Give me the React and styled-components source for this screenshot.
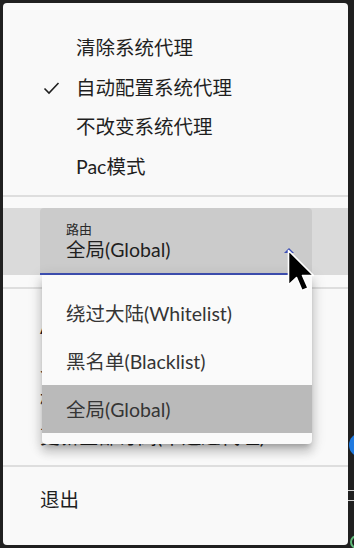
import React from "react";
import styled, { createGlobalStyle } from "styled-components";

const FONT = `Lato, "Noto Sans CJK SC", sans-serif`;

const GlobalStyle = createGlobalStyle`
  html, body { margin: 0; padding: 0; background: #202020; }
  body { font-family: ${FONT}; }
`;

const Screen = styled.div`
  position: relative;
  width: 354px;
  height: 548px;
  box-sizing: border-box;
  padding: 3px 0 3px 3px;
  background: #202020;
  display: flex;
  overflow: hidden;
  font-family: ${FONT};
`;

const Panel = styled.div`
  width: 345px;
  background: #f9f9f9;
  border-radius: 4px;
  display: flex;
  flex-direction: column;
`;

const SideStrip = styled.div`
  position: relative;
  flex: 1;
`;

const BlueDot = styled.div`
  position: absolute;
  left: 1px;
  top: 430px;
  width: 24px;
  height: 24px;
  border-radius: 50%;
  background: #1f7ae0;
`;

const StripLine = styled.div`
  position: absolute;
  left: 0;
  right: 0;
  top: ${(p) => p.$top}px;
  height: 1px;
  background: #cfcfcf;
`;

const GreenRing = styled.div`
  position: absolute;
  left: 2px;
  top: 532px;
  width: 10px;
  height: 10px;
  border-radius: 50%;
  border: 2px solid #5fb878;
`;

const TopList = styled.div`
  padding-top: 24.5px;
  display: flex;
  flex-direction: column;
`;

const MenuItem = styled.div`
  box-sizing: border-box;
  height: 39.5px;
  display: flex;
  align-items: center;
  padding: 2px 0 0 ${(p) => p.$indent}px;
  font-size: 19.5px;
  line-height: 24px;
  color: #1f1f1f;
  white-space: nowrap;
`;

const CheckSlot = styled.span`
  width: 33px;
  display: flex;
  align-items: center;
`;

const Divider = styled.div`
  height: 2px;
  background: #dedede;
  margin-top: ${(p) => p.$mt}px;
`;

const Band = styled.div`
  margin-top: 11px;
  height: 67px;
  background: #dadada;
  padding-left: 37px;
  position: relative;
  z-index: 2;
`;

const SelectBox = styled.div`
  position: relative;
  width: 272px;
  height: 67px;
  box-sizing: border-box;
  background: #cbcbcb;
  border-radius: 4px 4px 0 0;
  border-bottom: 2px solid #3f51b5;
  padding: 13px 0 0 26px;
  display: flex;
  flex-direction: column;
`;

const SelectLabel = styled.div`
  font-size: 13px;
  line-height: 16px;
  color: #2a2a2a;
`;

const SelectValue = styled.div`
  margin-top: 1px;
  font-size: 19.5px;
  line-height: 24px;
  color: #1f1f1f;
`;

const Caret = styled.svg`
  position: absolute;
  right: 18px;
  top: 40px;
`;

const Popover = styled.div`
  position: absolute;
  top: calc(100% + 2px);
  left: 2px;
  width: 270px;
  box-sizing: border-box;
  padding: 14px 0 11px;
  background: #fafafa;
  border-radius: 0 0 4px 4px;
  box-shadow: 0 5px 5px -3px rgba(0, 0, 0, 0.2),
    0 8px 10px 1px rgba(0, 0, 0, 0.14), 0 3px 14px 2px rgba(0, 0, 0, 0.12);
`;

const PopItem = styled.div`
  box-sizing: border-box;
  height: 48px;
  display: flex;
  align-items: center;
  padding: 2px 0 0 24px;
  font-size: 19.5px;
  line-height: 24px;
  color: #353535;
  background: ${(p) => (p.$active ? "#bababa" : "transparent")};
  white-space: nowrap;
`;

const HiddenList = styled.div`
  margin-top: 19px;
  display: flex;
  flex-direction: column;
`;

const HiddenItem = styled.div`
  box-sizing: border-box;
  height: 36.5px;
  display: flex;
  align-items: center;
  padding: 2px 0 0 37px;
  font-size: 19.5px;
  line-height: 24px;
  color: #1f1f1f;
  white-space: nowrap;
`;

const ExitItem = styled.div`
  box-sizing: border-box;
  margin-top: 11.5px;
  height: 40px;
  display: flex;
  align-items: center;
  padding: 2px 0 0 37px;
  font-size: 19.5px;
  line-height: 24px;
  color: #1f1f1f;
`;

const Cursor = styled.svg`
  position: absolute;
  left: 287px;
  top: 249px;
  z-index: 10;
`;

const Check = () => (
  <svg width="17" height="14" viewBox="0 0 17 14">
    <polyline
      points="1.5,7.5 6,12 15.5,2"
      fill="none"
      stroke="#1f1f1f"
      strokeWidth="1.6"
    />
  </svg>
);

export default function App() {
  return (
    <>
      <GlobalStyle />
      <Screen>
        <Panel>
          <TopList>
            <MenuItem $indent={73}>清除系统代理</MenuItem>
            <MenuItem $indent={40}>
              <CheckSlot>
                <Check />
              </CheckSlot>
              自动配置系统代理
            </MenuItem>
            <MenuItem $indent={73}>不改变系统代理</MenuItem>
            <MenuItem $indent={73}>Pac模式</MenuItem>
          </TopList>
          <Divider $mt={9.5} />
          <Band>
            <SelectBox>
              <SelectLabel>路由</SelectLabel>
              <SelectValue>全局(Global)</SelectValue>
              <Caret width="10" height="5" viewBox="0 0 10 5">
                <polygon points="0,5 5,0 10,5" fill="#3f51b5" />
              </Caret>
              <Popover>
                <PopItem>绕过大陆(Whitelist)</PopItem>
                <PopItem>黑名单(Blacklist)</PopItem>
                <PopItem $active>全局(Global)</PopItem>
              </Popover>
            </SelectBox>
          </Band>
          <Divider $mt={12} />
          <HiddenList>
            <HiddenItem>Auto 启动</HiddenItem>
            <HiddenItem>允许局域网连接</HiddenItem>
            <HiddenItem>检查更新</HiddenItem>
            <HiddenItem>更新全部订阅(不通过代理)</HiddenItem>
          </HiddenList>
          <Divider $mt={11} />
          <ExitItem>退出</ExitItem>
        </Panel>
        <SideStrip>
          <BlueDot />
          <StripLine $top={487} />
          <StripLine $top={497} />
          <GreenRing />
        </SideStrip>
        <Cursor width="30" height="46" viewBox="0 0 30 46">
          <polygon
            points="1.5,1.5 1.5,36 9.5,28.5 15,41.5 21,39 15.5,26.5 26.5,26.5"
            fill="#000"
            stroke="#fff"
            strokeWidth="1.6"
            strokeLinejoin="round"
          />
        </Cursor>
      </Screen>
    </>
  );
}
